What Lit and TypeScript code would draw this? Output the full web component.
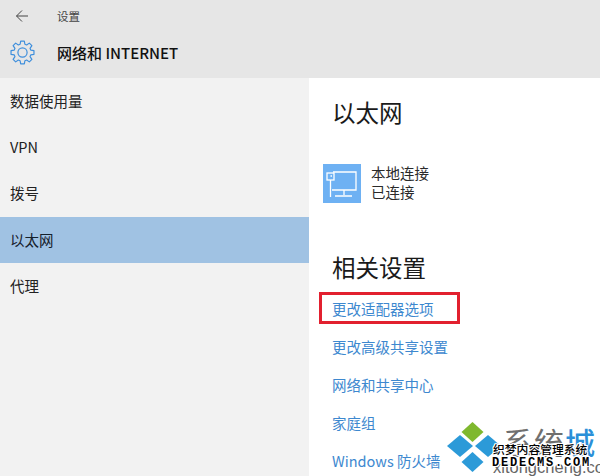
import { LitElement, html, css } from "lit";
import { customElement } from "lit/decorators.js";

function gearPath(cx: number, cy: number, outer: number, inner: number, teeth: number): string {
  const pts: string[] = [];
  const step = (Math.PI * 2) / teeth;
  for (let i = 0; i < teeth; i++) {
    const a = i * step - Math.PI / 2;
    const list: [number, number][] = [
      [inner, a - step * 0.36],
      [outer, a - step * 0.2],
      [outer, a + step * 0.2],
      [inner, a + step * 0.36],
    ];
    for (const [r, t] of list) {
      pts.push(`${(cx + r * Math.cos(t)).toFixed(2)} ${(cy + r * Math.sin(t)).toFixed(2)}`);
    }
  }
  return "M" + pts.join("L") + "Z";
}

@customElement("app-root")
export class AppRoot extends LitElement {
  static styles = css`
    :host {
      display: block;
      position: relative;
      width: 600px;
      height: 476px;
      overflow: hidden;
      background: #fff;
      font-family: "Noto Sans CJK SC", "Open Sans", sans-serif;
      color: #1c1c1c;
    }
    .header {
      height: 78px;
      background: #e6e6e6;
      display: flex;
      flex-direction: column;
    }
    .top {
      height: 32px;
      display: flex;
      align-items: center;
      padding-left: 16px;
      gap: 29px;
      font-size: 11.5px;
      color: #444;
    }
    .top svg { display: block; }
    .head {
      flex: 1;
      display: flex;
      align-items: center;
      padding: 0 0 6px 10px;
      gap: 22px;
      font-size: 15px;
      font-weight: 500;
      color: #111;
    }
    .body { display: flex; height: 398px; }
    .side {
      width: 309px;
      background: #f2f2f2;
      font-size: 14.5px;
      flex: none;
    }
    .item {
      height: 46.3px;
      box-sizing: border-box;
      display: flex;
      align-items: center;
      padding: 0 0 2px 10px;
      color: #222;
    }
    .item.on { background: #a0c2e3; color: #16202b; }
    .main {
      flex: 1;
      padding: 19px 0 0 23px;
      display: flex;
      flex-direction: column;
    }
    h1, h2 {
      margin: 0;
      font-weight: 400;
      font-size: 23.5px;
      line-height: 30px;
      color: #1a1a1a;
    }
    .conn {
      display: flex;
      gap: 10px;
      margin: 37px 0 0 -9px;
      align-items: center;
    }
    .conn-icon {
      width: 38px;
      height: 39px;
      background: #6eb1f3;
      flex: none;
      display: block;
    }
    .conn-text {
      font-size: 14.5px;
      line-height: 19px;
      color: #2a2a2a;
      margin-top: -4px;
    }
    h2 { margin-top: 49px; }
    .links {
      margin-top: 7px;
      display: flex;
      flex-direction: column;
      font-size: 14.5px;
      color: #3d88cf;
    }
    .links a {
      height: 38.1px;
      display: flex;
      align-items: center;
      white-space: nowrap;
    }
    .redbox {
      position: absolute;
      left: 319px;
      top: 292px;
      width: 141px;
      height: 32px;
      box-sizing: border-box;
      border: 3px solid #e2202f;
    }
    .mark {
      position: absolute;
      left: 445px;
      top: 418px;
      width: 155px;
      height: 58px;
    }
    .logo { position: absolute; left: 0; top: 0; display: block; }
    .brand {
      position: absolute;
      left: 58px;
      top: 6px;
      font-size: 30px;
      line-height: 34px;
      letter-spacing: 1px;
      color: #6f6f6f;
      white-space: nowrap;
    }
    .brand b { font-weight: 500; color: #2a8fd8; }
    .url {
      position: absolute;
      left: 48px;
      top: 39px;
      font: 16.5px/20px "Liberation Sans", sans-serif;
      color: #666;
      white-space: nowrap;
    }
    .wm1, .wm2 {
      position: absolute;
      white-space: nowrap;
      color: #000;
      font-weight: 500;
      text-shadow: 1px 0 0 #fff, -1px 0 0 #fff, 0 1px 0 #fff, 0 -1px 0 #fff,
        1px 1px 0 #fff, -1px -1px 0 #fff, 1px -1px 0 #fff, -1px 1px 0 #fff;
    }
    .wm1 { left: 48px; top: 23px; font-size: 11.8px; line-height: 16px; }
    .wm2 {
      left: 47px;
      top: 38px;
      font: 700 12px/15px "Liberation Mono", monospace;
      letter-spacing: 1.8px;
    }
  `;

  render() {
    const side = ["数据使用量", "VPN", "拨号", "以太网", "代理"];
    const links = ["更改适配器选项", "更改高级共享设置", "网络和共享中心", "家庭组", "Windows 防火墙"];
    return html`
      <div class="header">
        <div class="top">
          <svg width="12" height="12" viewBox="0 0 12 12" fill="none" stroke="#444" stroke-width="1">
            <path d="M0.5 6H12M6 0.5L0.5 6L6 11.5" />
          </svg>
          <span>设置</span>
        </div>
        <div class="head">
          <svg width="25" height="25" viewBox="0 0 25 25" fill="none" stroke="#3f8fdc" stroke-width="1.2">
            <circle cx="12.5" cy="12.5" r="4.6" />
            <path d=${gearPath(12.5, 12.5, 11.6, 8.6, 8)} stroke-linejoin="round" />
          </svg>
          <span>网络和 INTERNET</span>
        </div>
      </div>
      <div class="body">
        <div class="side">
          ${side.map((s) => html`<div class="item ${s === "以太网" ? "on" : ""}">${s}</div>`)}
        </div>
        <div class="main">
          <h1>以太网</h1>
          <div class="conn">
            <svg class="conn-icon" viewBox="0 0 38 39" fill="none" stroke="#fff" stroke-width="1.3">
              <path d="M10 8H33V26H9" />
              <path d="M21 26V31M12 32H29" />
              <rect x="4" y="9" width="7" height="7" />
              <path d="M7.500 16V33M7.500 12H9" />
            </svg>
            <div class="conn-text">本地连接<br />已连接</div>
          </div>
          <h2>相关设置</h2>
          <div class="links">${links.map((l) => html`<a>${l}</a>`)}</div>
        </div>
      </div>
      <div class="redbox"></div>
      <div class="mark">
        <svg class="logo" width="60" height="58" viewBox="0 0 60 58">
          <path d="M27.500 4L38.500 14L27.500 24L16.500 14Z" fill="#7fb82e" />
          <path d="M15 17L28 28L15 39L2 28Z" fill="#2c9ad8" />
          <path d="M43 17L56 28L43 39L30 28Z" fill="#2c9ad8" />
          <path d="M27.500 34L38.500 44L27.500 54L16.500 44Z" fill="#2c9ad8" />
        </svg>
        <div class="brand">系统<b>城</b></div>
        <div class="url">xitongcheng.com</div>
        <div class="wm1">织梦内容管理系统</div>
        <div class="wm2">DEDECMS.COM</div>
      </div>
    `;
  }
}
